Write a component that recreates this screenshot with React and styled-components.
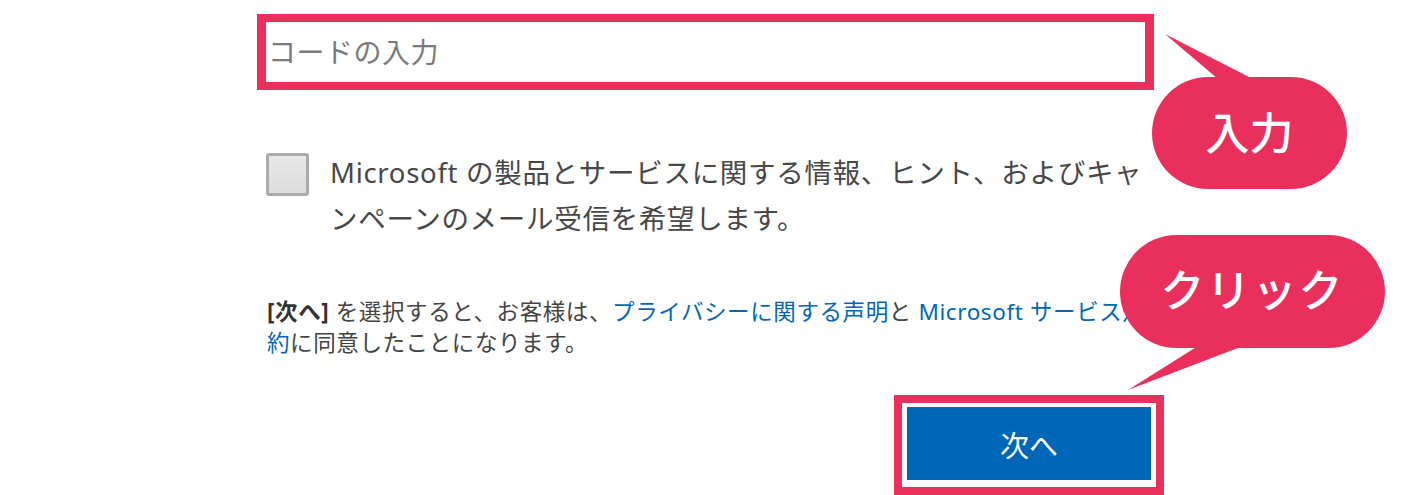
import React from 'react';
import styled, { createGlobalStyle } from 'styled-components';

const RED = '#e9305d';
const BLUE = '#0067b8';

const GlobalStyle = createGlobalStyle`
  html, body { margin: 0; padding: 0; background: #fff; }
  body { font-family: "Noto Sans", "Noto Sans CJK JP", sans-serif; }
`;

const Page = styled.div`
  position: relative;
  width: 1401px;
  height: 495px;
  overflow: hidden;
  background: #fff;
  padding-left: 257px;
  box-sizing: border-box;
`;

const Form = styled.div`
  width: 897px;
  display: flex;
  flex-direction: column;
`;

const CodeInput = styled.input`
  box-sizing: border-box;
  margin: 14px 0 0;
  width: 100%;
  height: 76px;
  border: solid ${RED};
  border-width: 8px 9px;
  padding: 0 0 2px 2px;
  font-family: "Noto Sans CJK JP", sans-serif;
  font-size: 28px;
  letter-spacing: 0.5px;
  color: #333;
  outline: none;
  background: #fff;
  &::placeholder { color: #7a7a7a; }
`;

const CheckRow = styled.label`
  display: flex;
  align-items: flex-start;
  gap: 21px;
  margin: 60px 0 0 9px;
`;

const CheckBox = styled.span`
  flex: none;
  box-sizing: border-box;
  width: 43px;
  height: 43px;
  margin-top: 3px;
  border: 3px solid #ababab;
  border-radius: 3px;
  background: linear-gradient(#e8e8e8, #dcdcdc);
`;

const CheckText = styled.span`
  font-size: 27.5px;
  line-height: 46px;
  letter-spacing: 0.7px;
  color: #474747;
  white-space: nowrap;
`;

const Legal = styled.p`
  margin: 54px 0 0 10px;
  font-size: 22.5px;
  line-height: 31px;
  letter-spacing: 0.6px;
  color: #444;
  white-space: nowrap;
`;

const Strong = styled.b`
  color: #333;
  font-weight: 700;
`;

const Link = styled.a`
  color: ${BLUE};
  text-decoration: none;
`;

const ButtonRow = styled.div`
  display: flex;
  justify-content: flex-end;
  margin: 37px -10px 0 0;
`;

const Highlight = styled.div`
  display: flex;
  border: 8px solid ${RED};
  padding: 4px 5px 7px;
`;

const NextButton = styled.button`
  width: 244px;
  height: 73px;
  border: none;
  background: ${BLUE};
  color: #fff;
  font-family: "Noto Sans CJK JP", sans-serif;
  font-size: 29px;
  padding: 0;
`;

const Callout = styled.div`
  position: absolute;
  left: ${p => p.$x}px;
  top: ${p => p.$y}px;
  width: ${p => p.$w}px;
  height: ${p => p.$h}px;
  z-index: 2;
`;

const Pill = styled.div`
  position: relative;
  z-index: 1;
  width: 100%;
  height: 100%;
  border-radius: 999px;
  background: ${RED};
  color: #fff;
  display: flex;
  align-items: center;
  justify-content: center;
  font-family: "Noto Sans CJK JP", sans-serif;
  font-weight: 500;
  font-size: 44px;
  letter-spacing: ${p => p.$ls || 0}px;
  padding-bottom: ${p => p.$pb || 0}px;
  box-sizing: border-box;
`;

const Tail = styled.svg`
  position: absolute;
  left: 0;
  top: ${p => p.$top}px;
  z-index: 0;
  overflow: visible;
`;

export default function App() {
  return (
    <>
      <GlobalStyle />
      <Page>
        <Form>
          <CodeInput placeholder="コードの入力" />
          <CheckRow>
            <CheckBox />
            <CheckText>
              Microsoft の製品とサービスに関する情報、ヒント、およびキャ
              <br />
              ンペーンのメール受信を希望します。
            </CheckText>
          </CheckRow>
          <Legal>
            <Strong>[次へ]</Strong> を選択すると、お客様は、
            <Link href="#">プライバシーに関する声明</Link>と{' '}
            <Link href="#">Microsoft サービス規</Link>
            <br />
            <Link href="#">約</Link>に同意したことになります。
          </Legal>
          <ButtonRow>
            <Highlight>
              <NextButton>次へ</NextButton>
            </Highlight>
          </ButtonRow>
        </Form>

        <Callout $x={1152} $y={77} $w={195} $h={112}>
          <Tail $top={-44} width="110" height="46">
            <polygon points="13,1 66,46 101,46" fill={RED} />
          </Tail>
          <Pill $pb={4}>入力</Pill>
        </Callout>

        <Callout $x={1120} $y={235} $w={265} $h={113}>
          <Tail $top={111} width="125" height="45">
            <polygon points="78,0 123,0 8,44" fill={RED} />
          </Tail>
          <Pill $ls={2} $pb={8}>クリック</Pill>
        </Callout>
      </Page>
    </>
  );
}
